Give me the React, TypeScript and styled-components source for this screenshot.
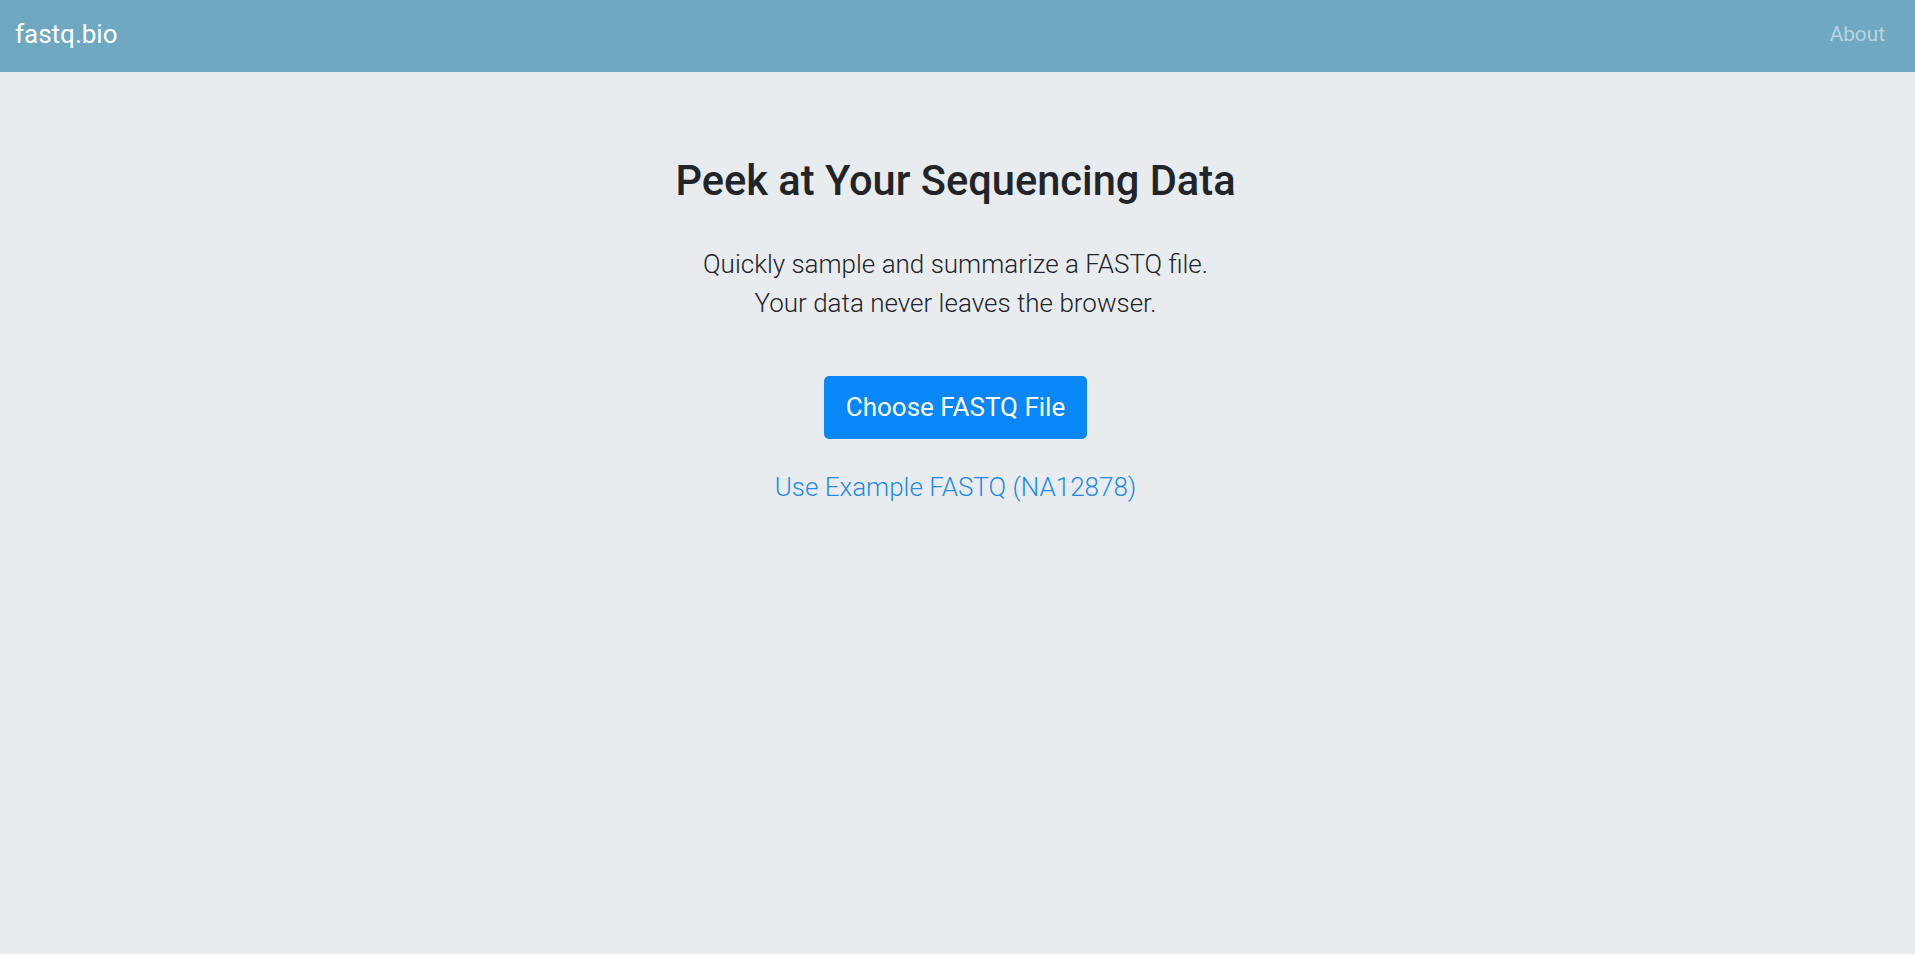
import React from "react";
import styled, { createGlobalStyle } from "styled-components";

const Global = createGlobalStyle`
  html, body { margin: 0; padding: 0; }
  body {
    background: #e9ecef;
    font-family: Roboto, "Noto Sans", sans-serif;
    color: #212529;
    min-height: 954px;
  }
`;

const NavBar = styled.nav`
  height: 72px;
  background: #6fa8c1;
  display: flex;
  align-items: center;
  justify-content: space-between;
  padding: 0 30px 4px 15px;
  box-sizing: border-box;
`;

const Brand = styled.a`
  font-size: 26px;
  line-height: 39px;
  color: #ffffff;
  text-decoration: none;
  font-weight: 400;
`;

const NavLink = styled.a`
  font-size: 20.8px;
  line-height: 31px;
  color: rgba(255, 255, 255, 0.5);
  text-decoration: none;
`;

const Main = styled.main`
  display: flex;
  flex-direction: column;
  align-items: center;
  text-align: center;
  padding: 84px 4px 0 0;
`;

const Title = styled.h2`
  margin: 0;
  font-size: 41.6px;
  line-height: 50px;
  font-weight: 500;
  color: #212529;
`;

const Lead = styled.p`
  margin: 39px 0 0;
  font-size: 26px;
  line-height: 39px;
  font-weight: 300;
  color: #212529;
`;

const PrimaryButton = styled.button`
  margin-top: 53px;
  width: 263px;
  height: 63px;
  border: none;
  border-radius: 5px;
  background: #0a87f7;
  color: #ffffff;
  font-family: Roboto, "Noto Sans", sans-serif;
  font-size: 26px;
  line-height: 39px;
  font-weight: 400;
  padding: 0;
  cursor: pointer;
`;

const ExampleLink = styled.a`
  margin-top: 29px;
  font-size: 26px;
  line-height: 39px;
  font-weight: 300;
  color: #248be4;
  text-decoration: none;
  cursor: pointer;
`;

export default function App() {
  return (
    <>
      <Global />
      <NavBar>
        <Brand href="#">fastq.bio</Brand>
        <NavLink href="#">About</NavLink>
      </NavBar>
      <Main>
        <Title>Peek at Your Sequencing Data</Title>
        <Lead>
          Quickly sample and summarize a FASTQ file.
          <br />
          Your data never leaves the browser.
        </Lead>
        <PrimaryButton>Choose FASTQ File</PrimaryButton>
        <ExampleLink>Use Example FASTQ (NA12878)</ExampleLink>
      </Main>
    </>
  );
}
